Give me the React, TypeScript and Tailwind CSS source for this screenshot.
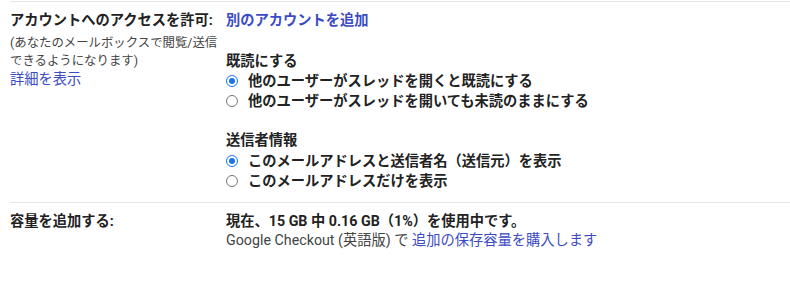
const Radio = ({ checked }: { checked?: boolean }) => {
  return (
    <span
      className={
        checked
          ? "flex items-center justify-center w-3 h-3 rounded-full border border-[#1a73e8] mr-[10px] shrink-0"
          : "flex items-center justify-center w-3 h-3 rounded-full border border-[#767676] mr-[10px] shrink-0"
      }
    >
      {checked && <span className="w-[6px] h-[6px] rounded-full bg-[#1a73e8]" />}
    </span>
  );
};

const App = () => {
  return (
    <div className="w-[790px] h-[282px] bg-white pl-[10px] pt-px font-['Roboto','Noto_Sans_CJK_JP',sans-serif] text-[#222]">
      {/* アカウントへのアクセス */}
      <div className="grid grid-cols-[216px_1fr] border-t border-[#e5e5e5] pt-[9px] pb-[11px] text-[14.25px] leading-[19px]">
        <div className="pr-[6px]">
          <p className="font-bold whitespace-nowrap">アカウントへのアクセスを許可:</p>
          <p className="mt-1 text-[12.4px] leading-[18px] text-[#444]">
            (あなたのメールボックスで閲覧/送信できるようになります)
          </p>
          <a className="block text-[#3b4bc5]">詳細を表示</a>
        </div>
        <div>
          <a className="block font-bold text-[#3b4bc5]">別のアカウントを追加</a>
          <p className="mt-[22px] font-bold">既読にする</p>
          <div className="flex items-center h-5 font-bold">
            <Radio checked />
            他のユーザーがスレッドを開くと既読にする
          </div>
          <div className="flex items-center h-5 font-bold">
            <Radio />
            他のユーザーがスレッドを開いても未読のままにする
          </div>
          <p className="mt-5 font-bold">送信者情報</p>
          <div className="flex items-center h-5 mt-px font-bold">
            <Radio checked />
            このメールアドレスと送信者名（送信元）を表示
          </div>
          <div className="flex items-center h-5 font-bold">
            <Radio />
            このメールアドレスだけを表示
          </div>
        </div>
      </div>

      {/* 容量を追加 */}
      <div className="grid grid-cols-[216px_1fr] border-t border-[#e5e5e5] pt-[9px] text-[14.25px] leading-[19px]">
        <p className="font-bold">容量を追加する:</p>
        <div>
          <p className="font-bold">現在、15 GB 中 0.16 GB（1%）を使用中です。</p>
          <p className="text-[#444]">
            Google Checkout (英語版) で <a className="text-[#3b4bc5]">追加の保存容量を購入します</a>
          </p>
        </div>
      </div>
    </div>
  );
};

export default App;
